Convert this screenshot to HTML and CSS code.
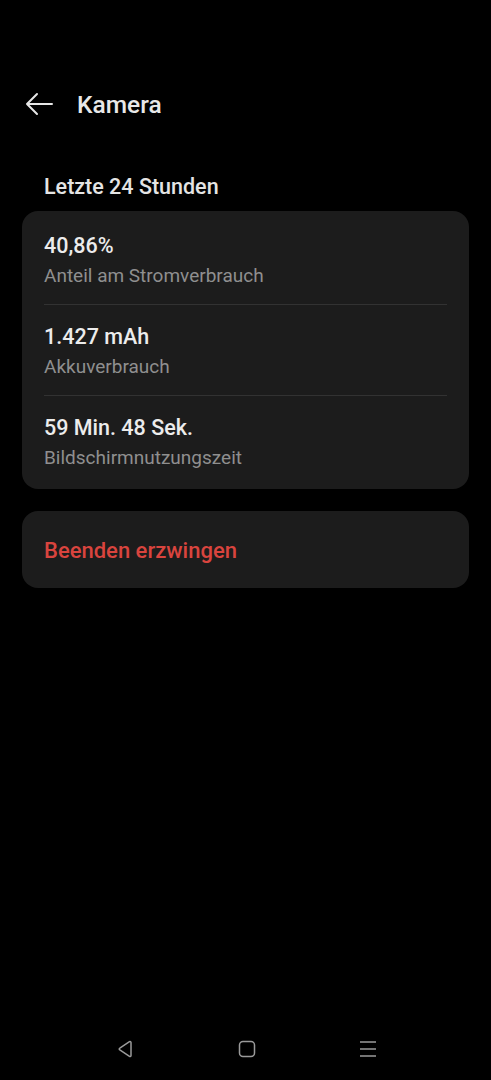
FILE: index.html
```html
<!DOCTYPE html>
<html lang="de">
<head>
    <meta charset="UTF-8">
    <meta name="viewport" content="width=device-width, initial-scale=1.0">
    <title>Kamera</title>
    <link rel="stylesheet" href="styles.css">
</head>
<body>
    <div class="screen">
        <div class="topbar">
            <svg class="back" width="30" height="24" viewBox="0 0 30 24">
                <path d="M28 12H3M13 2L3 12l10 10" fill="none" stroke="#e6e6e6" stroke-width="2" stroke-linecap="round" stroke-linejoin="round"/>
            </svg>
            <h1>Kamera</h1>
        </div>

        <h2 class="section-title">Letzte 24 Stunden</h2>

        <div class="card stats">
            <div class="row">
                <div class="value">40,86%</div>
                <div class="label">Anteil am Stromverbrauch</div>
            </div>
            <div class="row">
                <div class="value">1.427 mAh</div>
                <div class="label">Akkuverbrauch</div>
            </div>
            <div class="row">
                <div class="value">59 Min. 48 Sek.</div>
                <div class="label">Bildschirmnutzungszeit</div>
            </div>
        </div>

        <div class="card action">
            <span class="danger">Beenden erzwingen</span>
        </div>
    </div>

    <div class="navbar">
        <svg width="20" height="20" viewBox="0 0 20 20">
            <path d="M15 3.5v13a1 1 0 0 1-1.5.9L3.8 10.9a1 1 0 0 1 0-1.8l9.7-6.5a1 1 0 0 1 1.5.9z" fill="none" stroke="#9a9a9a" stroke-width="1.5" stroke-linejoin="round"/>
        </svg>
        <svg width="20" height="20" viewBox="0 0 20 20">
            <rect x="2.5" y="2.5" width="15" height="15" rx="3.5" fill="none" stroke="#9a9a9a" stroke-width="1.5"/>
        </svg>
        <svg width="20" height="20" viewBox="0 0 20 20">
            <path d="M2 3h16M2 10h16M2 17h16" fill="none" stroke="#9a9a9a" stroke-width="1.5"/>
        </svg>
    </div>
</body>
</html>
```

FILE: styles.css
```css
* { margin: 0; padding: 0; box-sizing: border-box; font-family: Roboto, "Noto Sans", sans-serif; }
body { background: #000; color: #e8e8e8; width: 491px; height: 1080px; overflow: hidden; display: flex; flex-direction: column; }
.screen { flex: 1; padding: 0 22px; }
.topbar { display: flex; align-items: center; height: 50px; margin-top: 79px; }
.back { margin-left: 2px; margin-right: 23px; }
h1 { font-size: 24.5px; font-weight: 500; color: #e8e8e8; }
.section-title { font-size: 21.5px; font-weight: 500; color: #e4e4e4; padding: 0 22px; margin-top: 46px; line-height: 24px; }
.card { background: #1c1c1c; border-radius: 16px; }
.stats { margin-top: 12px; padding: 3px 22px 3px; }
.row { padding: 20px 0 17px; border-bottom: 1px solid #323232; }
.row:last-child { border-bottom: none; }
.value { font-size: 21.5px; font-weight: 500; line-height: 24px; color: #ececec; margin-bottom: 7px; }
.label { font-size: 19px; line-height: 22px; color: #8f8f8f; }
.action { margin-top: 22px; height: 77px; display: flex; align-items: center; padding: 1px 22px 0; }
.danger { font-size: 22px; font-weight: 500; color: #d9443e; }
.navbar { height: 62px; display: flex; justify-content: center; gap: 101px; align-items: flex-start; padding-top: 21px; padding-left: 2px; }
```
